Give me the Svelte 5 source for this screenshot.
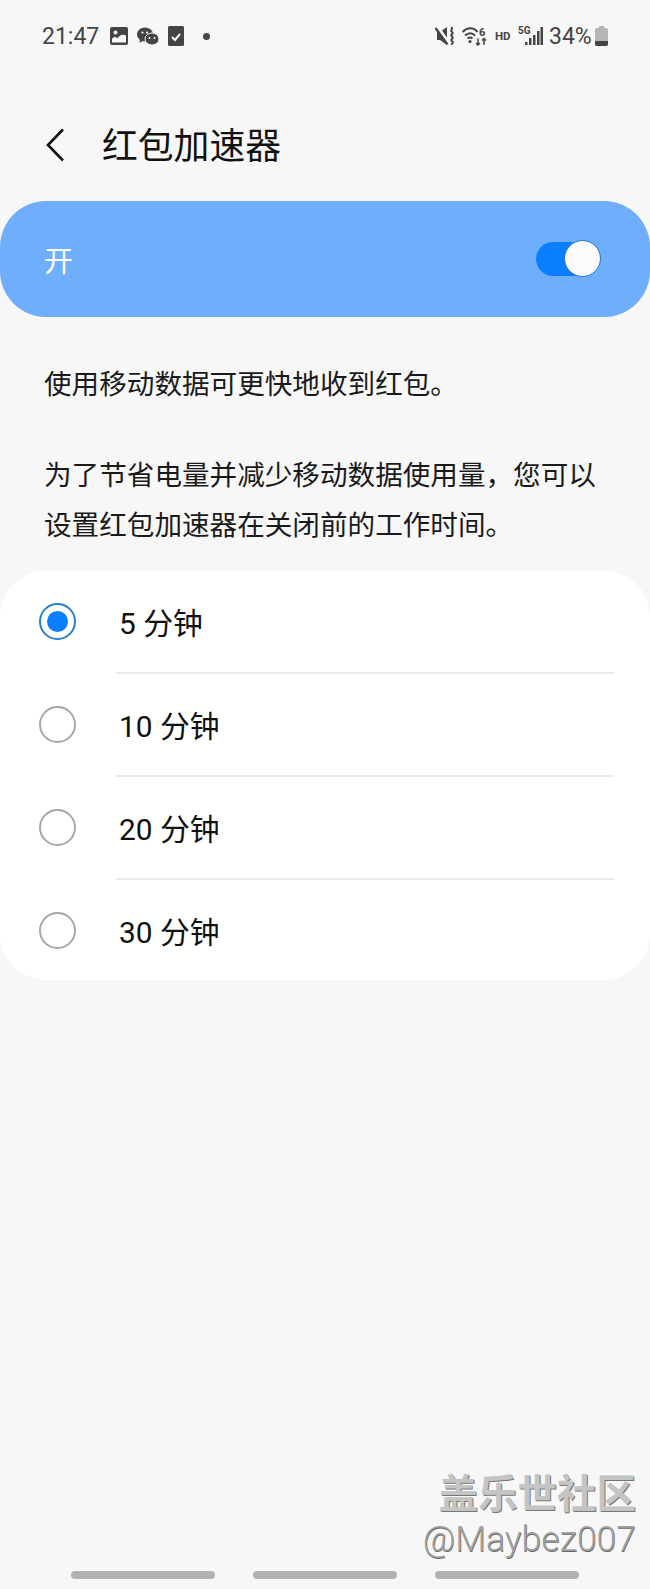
<script>
  const options = [
    { label: '5 分钟', selected: true },
    { label: '10 分钟', selected: false },
    { label: '20 分钟', selected: false },
    { label: '30 分钟', selected: false }
  ];
</script>

<div class="page">
  <div class="status">
    <span class="time">21:47</span>
    <svg class="s-img" viewBox="0 0 18 18" width="18" height="18">
      <rect width="18" height="18" rx="2" fill="#444"/>
      <circle cx="5.500" cy="5.500" r="2" fill="#f7f7f7"/>
      <path d="M2 15.500v-3.500c2-2.500 3.500-2.500 5.500-.5c2-3.500 5-4.500 8.500-3v7z" fill="#f7f7f7"/>
    </svg>
    <svg class="s-chat" viewBox="0 0 22 19" width="22" height="19">
      <ellipse cx="8" cy="7.500" rx="8" ry="7" fill="#444"/>
      <path d="M3 12l-.5 4l4-2.500z" fill="#444"/>
      <ellipse cx="15" cy="12" rx="7" ry="6" fill="#444" stroke="#f7f7f7" stroke-width="1"/>
      <circle cx="5.500" cy="5.500" r="1.100" fill="#f7f7f7"/>
      <circle cx="10" cy="5.500" r="1.100" fill="#f7f7f7"/>
      <circle cx="12.500" cy="11" r="1" fill="#f7f7f7"/>
      <circle cx="17.500" cy="11" r="1" fill="#f7f7f7"/>
    </svg>
    <svg class="s-check" viewBox="0 0 16 20" width="16" height="20">
      <rect width="16" height="20" rx="1.500" fill="#444"/>
      <path d="M4 11l3 3l5-6" fill="none" stroke="#f7f7f7" stroke-width="2"/>
    </svg>
    <span class="dot"></span>
    <span class="spacer"></span>
    <svg class="s-mute" viewBox="0 0 20 18" width="20" height="18">
      <path d="M2 5h3l7-5v18l-7-5h-3z" fill="#444"/>
      <path d="M2.500 0l10.500 15" stroke="#f7f7f7" stroke-width="3.400"/>
      <path d="M0.500 1l12 16.500" stroke="#444" stroke-width="2.200"/>
      <path d="M16 0c3 2-1.500 3 1 5s-2.500 2.500 0 4.500s-2.500 3 0 4.500s-1 2.500 0 4" fill="none" stroke="#444" stroke-width="2"/>
    </svg>
    <svg class="s-wifi" viewBox="0 0 27 20" width="27" height="20">
      <path d="M0.500 6c5-5 11-5 15 0M3 9.500c3.500-3 7-3 10 0M5.500 12.500c2-1.500 3-1.500 5 0" fill="none" stroke="#444" stroke-width="2"/>
      <circle cx="8" cy="15.500" r="1.600" fill="#444"/>
      <path d="M16 12.500v6.500M14 17l2 2l2-2M22 19v-6.500M20 14.500l2-2l2 2" fill="none" stroke="#444" stroke-width="1.500"/>
      <text x="17" y="10" font-size="11" font-weight="700" fill="#444" font-family="Roboto, sans-serif">6</text>
    </svg>
    <span class="hd">HD</span>
    <span class="net">
      <span class="g5">5G</span>
      <svg viewBox="0 0 18 20" width="18" height="20">
        <rect x="0" y="16" width="2.500" height="3" fill="#444"/>
        <rect x="4" y="12" width="2.500" height="7" fill="#444"/>
        <rect x="8" y="9" width="2.500" height="10" fill="#444"/>
        <rect x="12" y="5" width="2.500" height="14" fill="#444"/>
        <rect x="15.500" y="1" width="2.500" height="18" fill="#444"/>
      </svg>
    </span>
    <span class="pct">34%</span>
    <svg class="s-bat" viewBox="0 0 13 20" width="13" height="20">
      <rect x="4" y="0" width="5" height="2" fill="#b5b5b5"/>
      <rect x="0" y="2" width="13" height="18" rx="2" fill="#b5b5b5"/>
      <path d="M0 15h13v3a2 2 0 0 1-2 2h-9a2 2 0 0 1-2-2z" fill="#444"/>
    </svg>
  </div>

  <header class="head">
    <svg class="back" viewBox="0 0 20 34" width="20" height="34">
      <path d="M18 1.500L3 17l15 15.500" fill="none" stroke="#111" stroke-width="2.600"/>
    </svg>
    <h1>红包加速器</h1>
  </header>

  <section class="master">
    <span>开</span>
    <span class="switch"><span class="thumb"></span></span>
  </section>

  <div class="desc">
    <p>使用移动数据可更快地收到红包。</p>
    <p>为了节省电量并减少移动数据使用量，您可以<br />设置红包加速器在关闭前的工作时间。</p>
  </div>

  <ul class="list">
    {#each options as o}
      <li class="row">
        <span class="radio" class:on={o.selected}></span>
        <span class="label">{o.label}</span>
      </li>
    {/each}
  </ul>

  <nav class="nav">
    <span></span><span></span><span></span>
  </nav>

  <div class="mark">
    <div class="mark-cn">盖乐世社区</div>
    <div class="mark-en">@Maybez007</div>
  </div>
</div>

<style>
  :global(body) {
    margin: 0;
    background: #f7f7f7;
  }

  .page {
    position: relative;
    width: 650px;
    height: 1589px;
    overflow: hidden;
    display: flex;
    flex-direction: column;
    background: #f7f7f7;
    color: #111;
    font-family: Roboto, "Noto Sans CJK SC", sans-serif;
  }

  .status {
    height: 20px;
    margin-top: 26px;
    padding: 0 42px 0 42px;
    display: flex;
    align-items: center;
    color: #444;
  }

  .time {
    font-size: 23px;
    width: 68px;
  }

  .s-chat { margin-left: 9px; }
  .s-check { margin-left: 9px; }

  .dot {
    width: 7px;
    height: 7px;
    border-radius: 50%;
    background: #444;
    margin-left: 19px;
  }

  .spacer { flex: 1; }

  .s-wifi { margin-left: 7px; }

  .hd {
    margin-left: 6px;
    width: 18px;
    font-size: 11.500px;
    font-weight: 700;
  }

  .net {
    position: relative;
    width: 25px;
    height: 20px;
    margin-left: 5px;
    display: flex;
    justify-content: flex-end;
  }

  .g5 {
    position: absolute;
    left: 0;
    top: -1px;
    font-size: 10px;
    font-weight: 700;
  }

  .pct {
    font-size: 23px;
    margin-left: 6px;
    width: 46px;
  }

  .head {
    height: 40px;
    margin-top: 80px;
    padding-left: 45px;
    display: flex;
    align-items: center;
  }

  .back {
    margin-top: -2px;
  }

  h1 {
    margin: 2px 0 0 37px;
    font-size: 35.800px;
    line-height: 40px;
    font-weight: 400;
    color: #111;
  }

  .master {
    height: 116px;
    margin-top: 35px;
    padding: 0 50px 0 44px;
    display: flex;
    align-items: center;
    justify-content: space-between;
    border-radius: 46px;
    background: #6fadfd;
    color: #fff;
    font-size: 29px;
  }

  .switch {
    position: relative;
    width: 64px;
    height: 34px;
    border-radius: 17px;
    background: #0a7eff;
  }

  .thumb {
    position: absolute;
    right: -1px;
    top: -2px;
    width: 35px;
    height: 35px;
    border-radius: 50%;
    background: #fbfbfb;
    border: 1.500px solid #1d76d0;
  }

  .desc {
    margin-top: 43px;
    padding: 0 44px;
    font-size: 27.600px;
    line-height: 50px;
    color: #1a1a1a;
  }

  .desc p {
    margin: 0 0 41px;
  }

  .list {
    list-style: none;
    margin: -21px 0 0;
    padding: 0 0 8px;
    height: 401px;
    border-radius: 46px;
    background: #fff;
  }

  .row {
    position: relative;
    height: 103px;
    display: flex;
    align-items: center;
    padding-left: 39px;
    padding-top: 2px;
    box-sizing: border-box;
  }

  .row:first-child {
    height: 101px;
    padding-top: 0;
  }

  .row + .row::before {
    content: "";
    position: absolute;
    left: 116px;
    right: 36px;
    top: 0;
    height: 2px;
    background: #ebebeb;
  }

  .radio {
    width: 37px;
    height: 37px;
    box-sizing: border-box;
    border-radius: 50%;
    border: 2px solid #a8a8a8;
    display: flex;
    align-items: center;
    justify-content: center;
  }

  .radio.on {
    border-color: #2a7fd0;
  }

  .radio.on::after {
    content: "";
    width: 21px;
    height: 21px;
    border-radius: 50%;
    background: #0a7eff;
  }

  .label {
    margin-left: 43px;
    margin-top: -1px;
    font-size: 29.800px;
    color: #111;
  }

  .nav {
    margin-top: auto;
    margin-bottom: 10px;
    padding-left: 71px;
    display: flex;
    gap: 38px;
  }

  .nav span {
    width: 144px;
    height: 8px;
    border-radius: 4px;
    background: #b2b2b2;
  }

  .mark {
    position: absolute;
    right: 14px;
    top: 1472px;
    text-align: right;
    color: #c4c4c4;
  }

  .mark-cn {
    font-size: 39.500px;
    line-height: 46px;
    font-weight: 700;
    text-shadow: 1px 1px 0 #777;
  }

  .mark-en {
    font-size: 35.500px;
    line-height: 42px;
    font-family: Roboto, sans-serif;
    font-weight: 300;
    color: #a0a0a0;
    text-shadow: 0.5px 0.5px 0 #666;
  }
</style>
